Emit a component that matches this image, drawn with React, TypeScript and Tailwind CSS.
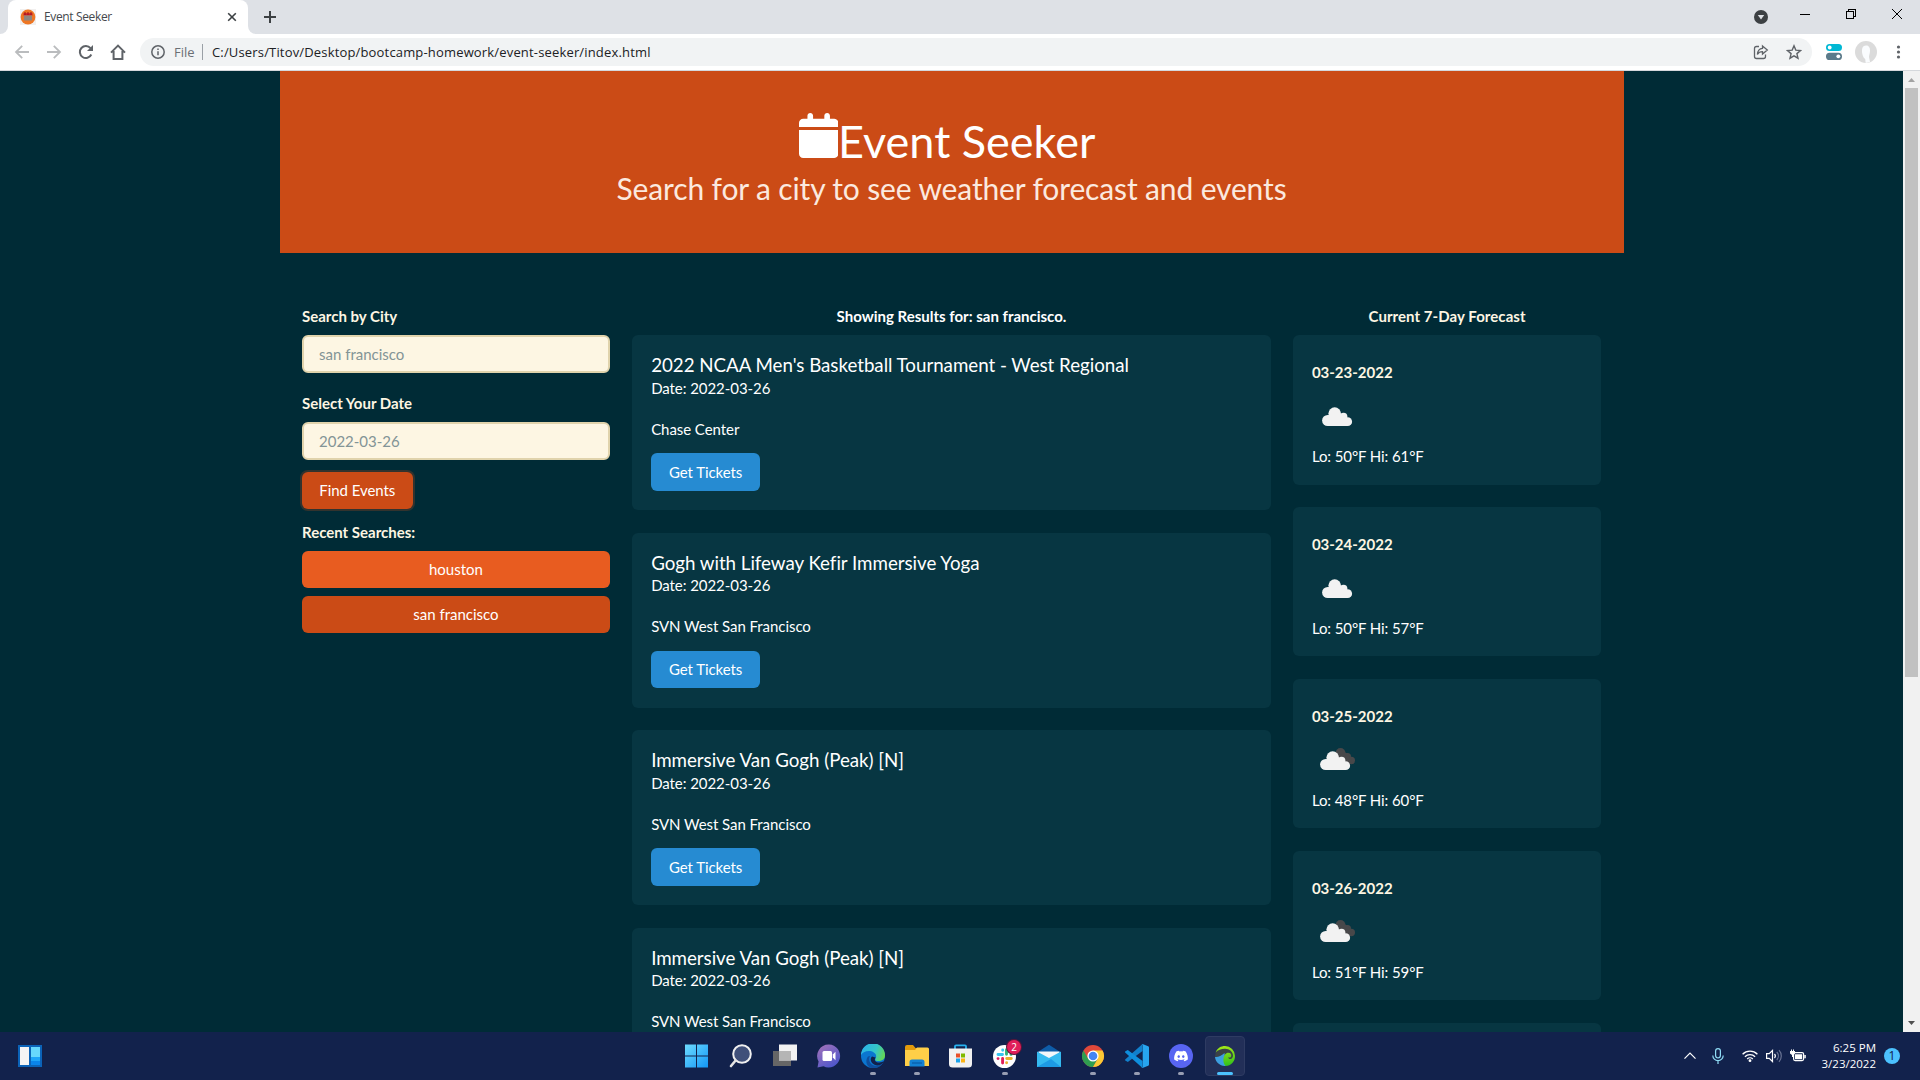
import React from 'react';
import { FaDiscord } from 'react-icons/fa';

const events = [
  { title: "2022 NCAA Men's Basketball Tournament - West Regional", venue: 'Chase Center' },
  { title: 'Gogh with Lifeway Kefir Immersive Yoga', venue: 'SVN West San Francisco' },
  { title: 'Immersive Van Gogh (Peak) [N]', venue: 'SVN West San Francisco' },
  { title: 'Immersive Van Gogh (Peak) [N]', venue: 'SVN West San Francisco' },
];

const forecast = [
  { date: '03-23-2022', lo: 50, hi: 61, broken: false },
  { date: '03-24-2022', lo: 50, hi: 57, broken: false },
  { date: '03-25-2022', lo: 48, hi: 60, broken: true },
  { date: '03-26-2022', lo: 51, hi: 59, broken: true },
  { date: '03-27-2022', lo: 51, hi: 60, broken: true },
];

function Lobes() {
  return (
    <g fill="#f2f2f2">
      <circle cx="15.700" cy="29.500" r="5.600" />
      <circle cx="22.700" cy="22.600" r="6.300" />
      <circle cx="31.500" cy="25.600" r="3.900" />
      <circle cx="35.700" cy="30.700" r="4.400" />
      <path d="M15.700 24.500L22 22l10 1.500 1.500 3.500 2.200 8.100H15.700z" />
    </g>
  );
}

function Cloud({ broken }: { broken: boolean }) {
  return (
    <svg className="mt-[7px] block h-[50px] w-[50px]" viewBox="0 0 50 50">
      {broken ? (
        <>
          <g fill="#48484a">
            <circle cx="28.500" cy="18" r="4.900" />
            <circle cx="35.500" cy="21.500" r="3.500" />
            <circle cx="39.300" cy="25.500" r="3.700" />
            <path d="M28 14.500l8 4.500 3.500 6-2 4-12-6z" />
          </g>
          <g transform="translate(-2 0)"><Lobes /></g>
        </>
      ) : (
        <Lobes />
      )}
    </svg>
  );
}

function TabStrip() {
  return (
    <div className="flex h-[34px] bg-[#dee1e6]">
      <div className="w-2 bg-white">
        <div className="h-full w-full rounded-br-lg bg-[#dee1e6]" />
      </div>
      <div className="flex w-[240px] items-center rounded-t-lg bg-white pl-3 pr-[11px]">
        <svg className="h-4 w-4" viewBox="0 0 16 16">
          <rect width="16" height="16" fill="#f1efee" />
          <circle cx="8" cy="8" r="7.4" fill="#ee7623" />
          <path d="M3.500 4.200h9v2.300h-9z" fill="#c8202b" />
          <path d="M4 6.500h8v5h-8z" fill="#8d8580" />
          <path d="M5 3v3M8 3v3M11 3v3" stroke="#a11018" />
        </svg>
        <span className="ml-2 mt-[-1px] flex-1 whitespace-nowrap font-['Open_Sans'] text-[12px] leading-4 tracking-[-0.36px] text-[#45484d]">Event Seeker</span>
        <svg className="h-[10px] w-[10px]" viewBox="0 0 10 10" stroke="#3c4043" strokeWidth="1.6">
          <path d="M1.2 1.2l7.6 7.6M8.8 1.2l-7.6 7.6" />
        </svg>
      </div>
      <div className="w-2 bg-white">
        <div className="h-full w-full rounded-bl-lg bg-[#dee1e6]" />
      </div>
      <svg className="ml-2 mt-[11px] h-3 w-3" viewBox="0 0 12 12" stroke="#3c4043" strokeWidth="2">
        <path d="M6 0v12M0 6h12" />
      </svg>
      <div className="ml-auto flex h-7 items-center pr-[18px]">
        <svg className="mt-1.5 h-[14px] w-[14px]" viewBox="0 0 14 14">
          <circle cx="7" cy="7" r="7" fill="#3c4043" />
          <path d="M3.8 5h6.4L7 9.6z" fill="#dee1e6" />
        </svg>
        <svg className="ml-8 h-[10px] w-[10px]" viewBox="0 0 10 10" stroke="#000" shapeRendering="crispEdges">
          <path d="M0 5.5h10" />
        </svg>
        <svg className="ml-9 h-[10px] w-[10px]" viewBox="0 0 10 10" stroke="#000" fill="none" shapeRendering="crispEdges">
          <path d="M.5 2.5h7v7h-7zM2.5 2.5v-2h7v7h-2" />
        </svg>
        <svg className="ml-9 h-[10px] w-[10px]" viewBox="0 0 10 10" stroke="#000">
          <path d="M0 0l10 10M10 0L0 10" />
        </svg>
      </div>
    </div>
  );
}

function Toolbar() {
  return (
    <div className="flex h-[37px] items-center border-b border-[#d5d8dc] bg-white pl-3.5">
      <svg className="h-4 w-4" viewBox="0 0 16 16" fill="none" stroke="#babcbe" strokeWidth="1.8">
        <path d="M15 8H2.5M8.2 1.8L2 8l6.200 6.200" />
      </svg>
      <svg className="ml-4 h-4 w-4" viewBox="0 0 16 16" fill="none" stroke="#babcbe" strokeWidth="1.8">
        <path d="M1 8h12.500M7.800 1.800L14 8l-6.200 6.200" />
      </svg>
      <svg className="ml-4 h-4 w-4" viewBox="0 0 16 16" fill="none" stroke="#5f6368" strokeWidth="2">
        <path d="M13.300 10.500A6 6 0 1 1 12.500 4.200" />
        <path d="M15 1v6H9z" fill="#5f6368" stroke="none" />
      </svg>
      <svg className="ml-4 h-4 w-4" viewBox="0 0 16 16" fill="none" stroke="#5f6368" strokeWidth="2">
        <path d="M1 8.600L8 1.600l7 7M3.600 7v8h8.800V7" />
      </svg>
      <div className="ml-3.5 flex h-7 w-[1672px] items-center rounded-full bg-[#f1f3f4] pl-[11px] pr-[10px] font-['Open_Sans'] text-[13px]">
        <svg className="h-[14px] w-[14px]" viewBox="0 0 14 14" fill="none" stroke="#5f6368" strokeWidth="1.500">
          <circle cx="7" cy="7" r="6.200" />
          <path d="M7 6.200v4M7 3.500v1.500" />
        </svg>
        <span className="ml-[9px] mt-px w-[21px] whitespace-nowrap text-[#6b6f74]">File</span>
        <span className="ml-[7px] h-4 w-px bg-[#9aa0a6]" />
        <span className="ml-[9px] mt-px whitespace-nowrap tracking-[0.165px] text-[#202124]">C:/Users/Titov/Desktop/bootcamp-homework/event-seeker/index.html</span>
        <svg className="ml-auto h-4 w-4" viewBox="0 0 16 16" fill="none" stroke="#5f6368" strokeWidth="1.300">
          <path d="M6 2.500H3.500Q1.500 2.500 1.500 4.500v8q0 2 2 2h7q2 0 2-2V10.500" />
          <path d="M9.500 2l4.800 4-4.800 4V7.700C7 7.700 5.500 8.600 4.400 10.500 4.600 7 6.500 4.600 9.500 4.300z" />
        </svg>
        <svg className="ml-[17px] h-4 w-4" viewBox="0 0 16 16" fill="none" stroke="#5f6368" strokeWidth="1.400">
          <path d="M8 1.800l1.800 4.300 4.700.4-3.600 3.100 1.100 4.600L8 11.800l-4 2.400 1.100-4.600L1.500 6.500l4.700-.4z" />
        </svg>
      </div>
      <svg className="ml-[14px] h-4 w-4" viewBox="0 0 16 16">
        <rect width="16" height="7" rx="3.500" fill="#00b8d4" />
        <circle cx="3.700" cy="3.500" r="1.900" fill="#fff" />
        <rect y="8.700" width="16" height="7.300" rx="3.600" fill="#5c7a8a" />
        <circle cx="12.300" cy="12.300" r="1.900" fill="#fff" />
      </svg>
      <svg className="ml-[13px] h-[22px] w-[22px]" viewBox="0 0 22 22">
        <circle cx="11" cy="11" r="11" fill="#dbdbdb" />
        <path d="M7 9c0-3 2-4.400 4.200-4.400S15.300 6.500 15 10c-.2 3-1 4-1 6l1 5-4.300 1-.5-4C7.800 16.500 6.800 12 7 9z" fill="#fafcfe" />
      </svg>
      <svg className="ml-[11px] h-4 w-4" viewBox="0 0 16 16" fill="#5f6368">
        <circle cx="10.500" cy="3" r="1.600" />
        <circle cx="10.500" cy="8" r="1.600" />
        <circle cx="10.500" cy="13" r="1.600" />
      </svg>
    </div>
  );
}

function Field({ label, value }: { label: string; value: string }) {
  return (
    <div>
      <div className="mb-[7.5px] leading-[22.5px] font-bold text-[#fdf6e3]">{label}</div>
      <div className="flex h-[37.5px] items-center rounded-[6px] border-2 border-[#e0d3ac] bg-[#fdf6e3] px-[15px] text-[#839496]">{value}</div>
    </div>
  );
}

function SearchPanel() {
  return (
    <div className="w-[307.875px]">
      <Field label="Search by City" value="san francisco" />
      <div className="h-[19.5px]" />
      <Field label="Select Your Date" value="2022-03-26" />
      <button className="mt-[12px] flex h-[37.5px] w-[110.5px] items-center justify-center whitespace-nowrap rounded-[6px] bg-[#cb4b16] tracking-[-0.05px] text-white shadow-[0_0_0_2px_rgba(203,75,22,0.25)]">Find Events</button>
      <div className="mt-[11.5px] mb-[7.500px] leading-[22.5px] font-bold text-[#fdf6e3]">Recent Searches:</div>
      <button className="mb-[7.5px] flex h-[37.5px] w-full items-center justify-center rounded-[6px] bg-[#e85c20] pb-px text-white">houston</button>
      <button className="flex h-[37.5px] w-full items-center justify-center rounded-[6px] bg-[#cb4b16] pb-px text-white">san francisco</button>
    </div>
  );
}

function EventList() {
  return (
    <div className="w-[638.25px]">
      <div className="mb-[7.5px] text-center leading-[22.5px] font-bold text-white">Showing Results for: san francisco.</div>
      <div className="flex flex-col gap-[22.5px]">
        {events.map((e, i) => (
          <div key={i} className="h-[175px] rounded-[6px] bg-[#073642] px-[18.75px] pt-[18px] tracking-[-0.06px] text-white">
            <div className="text-[18.75px] leading-[23.5px] tracking-[-0.035px]">{e.title}</div>
            <div className="leading-[22.5px]">Date: 2022-03-26</div>
            <div className="mt-[18.75px] leading-[22.5px]">{e.venue}</div>
            <button className="mt-[13px] flex h-[37.5px] w-[109px] items-center justify-center rounded-[6px] bg-[#268bd2] text-white">Get Tickets</button>
          </div>
        ))}
      </div>
    </div>
  );
}

function Forecast() {
  return (
    <div className="w-[307.875px]">
      <div className="mb-[7.5px] text-center leading-[22.5px] font-bold tracking-[0.06px] text-[#fdf6e3]">Current 7-Day Forecast</div>
      <div className="flex flex-col gap-[22.5px]">
        {forecast.map((f) => (
          <div key={f.date} className="h-[149.4px] rounded-[6px] bg-[#073642] px-[18.75px] pt-[26.3px]">
            <div className="leading-[22.5px] font-bold text-[#fdf6e3]">{f.date}</div>
            <Cloud broken={f.broken} />
            <div className="mt-[4px] leading-[22.5px] tracking-[-0.1px] text-white">{`Lo: ${f.lo}°F Hi: ${f.hi}°F`}</div>
          </div>
        ))}
      </div>
    </div>
  );
}

function Scrollbar() {
  return (
    <div className="flex w-[17px] flex-col items-center bg-[#f1f1f1]">
      <svg className="h-[17px] w-[17px]" viewBox="0 0 17 17"><path d="M5 11h7L8.500 7z" fill="#a3a3a3" /></svg>
      <div className="h-[589px] w-[13px] bg-[#c1c1c1]" />
      <svg className="mt-auto h-[17px] w-[17px]" viewBox="0 0 17 17"><path d="M5 6h7L8.500 10z" fill="#505050" /></svg>
    </div>
  );
}

const taskIcons: { running?: boolean; active?: boolean; badge?: string; art: React.ReactNode }[] = [
  {
    art: (
      <>
        <defs><linearGradient id="win" x1="0" y1="0" x2="24" y2="24" gradientUnits="userSpaceOnUse"><stop stopColor="#6fdcff" /><stop offset="1" stopColor="#0f94f5" /></linearGradient></defs>
        <path d="M0 .5H11V11.500H0zM12 .5H23V11.500H12zM0 12.500H11V23.500H0zM12 12.500H23V23.500H12z" fill="url(#win)" />
      </>
    ),
  },
  {
    art: (
      <>
        <circle cx="13" cy="10" r="8.800" fill="#40507a" stroke="#f0f0f0" strokeWidth="2" />
        <path d="M6.600 16.500L2 22" stroke="#e4e4e4" strokeWidth="2.600" strokeLinecap="round" />
      </>
    ),
  },
  {
    art: (
      <>
        <path d="M0 7h18v15H0z" fill="#666" />
        <path d="M6 .5h18v16H6z" fill="#f2f2f2" />
        <path d="M6 7h12v9.500H6z" fill="#b5b5b5" />
      </>
    ),
  },
  {
    art: (
      <>
        <defs><linearGradient id="chat" x1="0" y1="0" x2="16" y2="24" gradientUnits="userSpaceOnUse"><stop stopColor="#a974b8" /><stop offset="1" stopColor="#4b56cb" /></linearGradient></defs>
        <path d="M12 .5A11.500 11.500 0 1 1 6.500 22.300L.5 23.500 1.600 17.500A11.500 11.500 0 0 1 12 .5z" fill="url(#chat)" />
        <rect x="5.500" y="7" width="9.500" height="10" rx="1.500" fill="#fff" />
        <path d="M15.800 10.500L18.500 7.800v8.400L15.800 13.500z" fill="#fff" />
      </>
    ),
  },
  {
    running: true,
    art: (
      <>
        <defs>
          <linearGradient id="edge" x1="2" y1="3" x2="24" y2="12" gradientUnits="userSpaceOnUse"><stop stopColor="#2bb4e6" /><stop offset=".55" stopColor="#35c6c8" /><stop offset="1" stopColor="#68d84a" /></linearGradient>
        </defs>
        <circle cx="12" cy="12" r="12" fill="#0b76d0" />
        <path d="M0 11A12 12 0 0 1 24 11.500C24 15.500 20.500 17 17.500 17 14.500 17 13.800 15.800 14.500 14.500 17 10 12 7 8 7 4 7 1 9 0 11z" fill="url(#edge)" />
        <path d="M9.500 12C7 14 8 20 13 21.500 16 22.400 19.500 21.500 22.300 18.200 20 23 15 24.500 11 23.900 5 23 4 16 7 12.500z" fill="#0f4e9d" />
        <path d="M14.600 13.500C13 16 14 18 17 18.400 19.500 18.800 22 18 23 16.800L22.300 18.500C20 21 17 22 14 21 9 19 9 14 11 12.500z" fill="#12214b" />
      </>
    ),
  },
  {
    running: true,
    art: (
      <>
        <path d="M0 3a2 2 0 0 1 2-2h6l2.500 3H22v4H0z" fill="#e19a0c" />
        <path d="M0 6h10l2-2.500h10.500A1.500 1.500 0 0 1 24 5v17H0z" fill="#ffcf48" />
        <path d="M4.500 22.500V18a2.500 2.500 0 0 1 2.500-2.500h10a2.500 2.500 0 0 1 2.500 2.500v4.500z" fill="#1382d4" />
        <path d="M7 19h10" stroke="#0b62ae" strokeWidth="1.400" />
      </>
    ),
  },
  {
    art: (
      <>
        <path d="M6 5V2.300a1 1 0 0 1 1-1h9a1 1 0 0 1 1 1V5" fill="none" stroke="#27b2f0" strokeWidth="1.800" />
        <path d="M0 4.500h23V20a3.500 3.500 0 0 1-3.500 3.500H3.500A3.500 3.500 0 0 1 0 20z" fill="#f1f1f1" />
        <path d="M7 9.500h4v4h-4z" fill="#e8502a" /><path d="M12 9.500h4v4h-4z" fill="#7fba00" />
        <path d="M7 14.500h4v4h-4z" fill="#1aa3ea" /><path d="M12 14.500h4v4h-4z" fill="#fdb515" />
      </>
    ),
  },
  {
    running: true,
    badge: '2',
    art: (
      <>
        <circle cx="11.500" cy="12.500" r="11.500" fill="#fff" />
        <g strokeWidth="2.900" strokeLinecap="round">
          <path d="M5 10.500h4.500M9.700 6v.2" stroke="#36c5f0" />
          <path d="M13.500 5.700v4.500M18 10.400h.1" stroke="#2eb67d" />
          <path d="M13.700 14.500h4.600M13.600 18.700v.1" stroke="#ecb22e" />
          <path d="M9.600 14.500v4.500M5 14.600h.1" stroke="#e01e5a" />
        </g>
      </>
    ),
  },
  {
    art: (
      <>
        <path d="M0 8.500L12 .8l12 7.700V12H0z" fill="#0e5ca8" />
        <path d="M1.500 7.500h21v8h-21z" fill="#f4f7fa" />
        <path d="M0 7.500l12 6.500L24 7.500V23H0z" fill="#35baf0" />
        <path d="M0 23l14-8L24 23z" fill="#1d9ae4" />
      </>
    ),
  },
  {
    running: true,
    art: (
      <>
        <circle cx="12" cy="12" r="11" fill="#e0483a" />
        <path d="M2.470 6.500A11 11 0 0 0 12 23L16.800 14.700 7.200 14.700z" fill="#2f9e50" />
        <path d="M21.530 6.500A11 11 0 0 1 12 23L16.800 14.700 12 6.500z" fill="#fcc934" />
        <circle cx="12" cy="12" r="5.600" fill="#fff" />
        <circle cx="12" cy="12" r="4.300" fill="#4285f4" />
      </>
    ),
  },
  {
    running: true,
    art: (
      <>
        <path d="M17.500 0v7L2.800 18 .4 16.600Q-.3 16 .4 15.200z" fill="#1180cc" />
        <path d="M.4 7.200L2.800 6l14.700 11v7L.4 8.800Q-.3 8 .4 7.200z" fill="#0f8fdd" />
        <path d="M17.500 0L23.200 2.300Q24 2.700 24 3.500v17q0 .8-.8 1.200L17.500 24q-.8.200-1-.5c.8.400 1.200 0 1.200-.8V1.300c0-.8-.5-1.200-1.200-.8q.4-.7 1-.5z" fill="#27a5ef" />
      </>
    ),
  },
  {
    running: true,
    art: (
      <>
        <circle cx="12" cy="12" r="12" fill="#5865f2" />
        <svg x="4.500" y="4.500" width="15" height="15"><FaDiscord size={15} color="#fff" /></svg>
      </>
    ),
  },
  {
    running: true,
    active: true,
    art: (
      <>
        <defs><linearGradient id="wave" x1="12" y1="2" x2="14" y2="22" gradientUnits="userSpaceOnUse"><stop stopColor="#a4e818" /><stop offset="1" stopColor="#2fc01c" /></linearGradient></defs>
        <circle cx="12" cy="12" r="10" fill="#3b4248" />
        <path d="M2 13C5 13.500 8 12 11.500 9L13 21.900C7 22.500 2.500 18 2 13z" fill="#3c9fe0" />
        <path d="M2.500 8.500C4.500 4 8 2 12 2A10 10 0 0 1 22 12C22 17.500 18 22 12.500 22 9.500 18.500 9.500 11.500 13.500 9.200 16.500 7.800 19 10 18.200 12.200 17.800 13.800 16 14 15.300 13 15.300 16 19.500 15.800 20 12 20.300 8 16.500 4.800 12 4.800 8 4.800 5 6 2.500 8.500z" fill="url(#wave)" />
      </>
    ),
  },
];

function Taskbar() {
  return (
    <div className="relative flex h-12 items-center justify-between bg-[#12224c] pl-[18px] pr-5">
      <svg className="h-[22px] w-6" viewBox="0 0 24 22">
        <path d="M0 0h24v22H0z" fill="#0b63b8" />
        <path d="M2 2h9v18H2z" fill="#f4f4f4" />
        <path d="M13 2h9v10h-9z" fill="#68d8fc" /><path d="M13 12h9v4h-9z" fill="#1ea5f8" /><path d="M13 16h9v4h-9z" fill="#0a84ea" />
      </svg>
      <div className="absolute left-[675px] top-0 flex">
        {taskIcons.map((t, i) => (
          <div key={i} className="relative flex h-12 w-11 items-center justify-center">
            {t.active && <div className="absolute left-[2px] top-1 h-10 w-10 rounded border border-[#2e3b62] bg-[#222f58]" />}
            <svg className="relative h-6 w-6" viewBox="0 0 24 24">{t.art}</svg>
            {t.running && !t.active && <div className="absolute bottom-[5px] left-[19px] h-[3px] w-1.5 rounded-full bg-[#989eb2]" />}
            {t.active && <div className="absolute bottom-[5px] left-[14px] h-[3px] w-4 rounded-full bg-[#4cc2ff]" />}
            {t.badge && (
              <div className="absolute left-[24px] top-[8px] flex h-[14px] w-[14px] items-center justify-center rounded-full bg-[#e01e5a] font-['Open_Sans'] text-[10px] leading-[14px] text-white ring-1 ring-[#5c1638]">{t.badge}</div>
            )}
          </div>
        ))}
      </div>
      <div className="flex items-center">
        <svg className="h-3 w-3" viewBox="0 0 12 12" fill="none" stroke="#fff" strokeWidth="1.200"><path d="M.5 8.700L6 3.200l5.500 5.500" /></svg>
        <svg className="ml-[16px] h-4 w-3" viewBox="0 0 12 16" fill="none" stroke="#8fdcf5" strokeWidth="1.200">
          <rect x="3.600" y=".6" width="4.800" height="9.400" rx="2.400" />
          <path d="M.8 7.500a5.200 5.200 0 0 0 10.400 0M6 12.700V16" />
        </svg>
        <svg className="ml-[18px] h-[14px] w-4" viewBox="0 0 16 14" fill="none" stroke="#fff" strokeWidth="1.300">
          <path d="M.6 5.200a10.400 10.400 0 0 1 14.800 0M2.900 7.700a7.200 7.200 0 0 1 10.200 0M5.200 10a4 4 0 0 1 5.600 0" />
          <circle cx="8" cy="11.700" r="1.400" fill="#fff" stroke="none" />
        </svg>
        <svg className="ml-2 h-[14px] w-4" viewBox="0 0 16 14" fill="none" stroke="#fff" strokeWidth="1.200">
          <path d="M.6 4.700h2.600L6.500 1.500v11L3.200 9.300H.6z" />
          <path d="M8.500 5a3 3 0 0 1 0 4" />
          <path d="M10.800 3a6 6 0 0 1 0 8M13 1.200a8.500 8.500 0 0 1 0 11.600" stroke="#6a7494" />
        </svg>
        <svg className="ml-2 h-[14px] w-4" viewBox="0 0 16 14" fill="#fff">
          <path d="M0 2h1V.5h1V2h1V.5h1V2h1v2.500L3.500 6v2H2V6L0 4.500z" />
          <rect x="3.600" y="3.600" width="10" height="8" rx="1.500" fill="none" stroke="#fff" strokeWidth="1.200" />
          <path d="M5 5.200h7.200v5H5zM14.300 6h1.500v3.200h-1.500z" />
        </svg>
        <div className="ml-[14px] w-[56px] font-['Open_Sans'] text-[11.5px] leading-4 whitespace-nowrap text-white">
          <div className="flex justify-end"><span>6:25 PM</span></div>
          <div className="flex justify-end"><span>3/23/2022</span></div>
        </div>
        <div className="ml-2 flex h-4 w-4 items-center justify-center rounded-full bg-[#4cc2ff] font-['Open_Sans'] text-[12px] leading-4 text-[#12224c]">1</div>
      </div>
    </div>
  );
}

export default function App() {
  return (
    <div className="flex h-[1080px] w-[1920px] flex-col overflow-hidden bg-[#002b36]">
      <TabStrip />
      <Toolbar />
      <div className="flex h-[961px]">
        <main className="flex-1 overflow-hidden font-['Lato',sans-serif] text-[15px]">
          <div className="mx-auto w-[1344px]">
            <header className="flex h-[182px] flex-col items-center bg-[#cb4b16] pt-[45px]">
              <h1 className="flex h-[50.6px] pr-[9px] text-[45px] leading-[50.6px] text-white">
                <svg className="mt-[-3.500px] h-[45px] w-[39.4px]" viewBox="0 0 448 512" fill="currentColor">
                  <path d="M96 32C96 14.330 110.300 0 128 0C145.700 0 160 14.330 160 32V64H288V32C288 14.330 302.300 0 320 0C337.700 0 352 14.330 352 32V64H400C426.500 64 448 85.490 448 112V160H0V112C0 85.490 21.490 64 48 64H96V32zM448 464C448 490.500 426.500 512 400 512H48C21.490 512 0 490.500 0 464V192H448V464z" />
                </svg>
                Event Seeker
              </h1>
              <p className="mt-[3.75px] text-[30px] leading-[37.5px] tracking-[-0.14px] text-[#fbe9df]">Search for a city to see weather forecast and events</p>
            </header>
            <div className="flex justify-between px-[22.5px] pt-[52.2px]">
              <SearchPanel />
              <EventList />
              <Forecast />
            </div>
          </div>
        </main>
        <Scrollbar />
      </div>
      <Taskbar />
    </div>
  );
}
